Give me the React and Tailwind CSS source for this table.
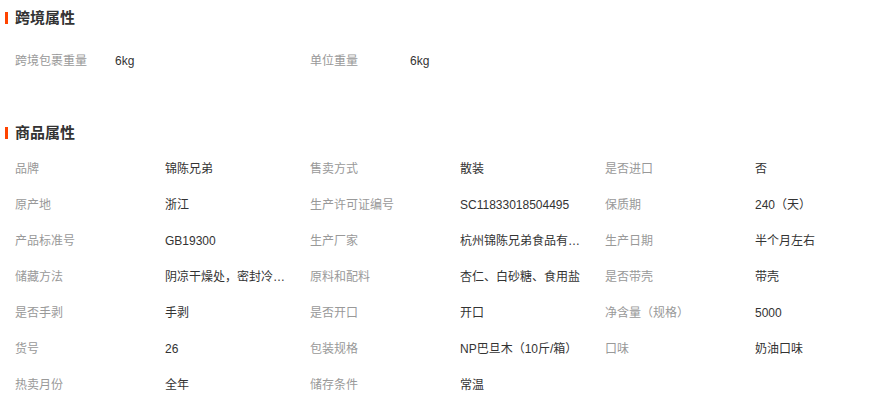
const crossAttrs = [
  { label: "跨境包裹重量", value: "6kg" },
  { label: "单位重量", value: "6kg" },
];

const productAttrs = [
  { label: "品牌", value: "锦陈兄弟" },
  { label: "售卖方式", value: "散装" },
  { label: "是否进口", value: "否" },
  { label: "原产地", value: "浙江" },
  { label: "生产许可证编号", value: "SC11833018504495" },
  { label: "保质期", value: "240（天）" },
  { label: "产品标准号", value: "GB19300" },
  { label: "生产厂家", value: "杭州锦陈兄弟食品有限公司" },
  { label: "生产日期", value: "半个月左右" },
  { label: "储藏方法", value: "阴凉干燥处，密封冷藏保存" },
  { label: "原料和配料", value: "杏仁、白砂糖、食用盐" },
  { label: "是否带壳", value: "带壳" },
  { label: "是否手剥", value: "手剥" },
  { label: "是否开口", value: "开口" },
  { label: "净含量（规格）", value: "5000" },
  { label: "货号", value: "26" },
  { label: "包装规格", value: "NP巴旦木（10斤/箱）" },
  { label: "口味", value: "奶油口味" },
  { label: "热卖月份", value: "全年" },
  { label: "储存条件", value: "常温" },
];

function SectionTitle({ children, className = "" }) {
  return (
    <div className={`flex h-[36px] items-center pl-[5px] ${className}`}>
      <span className="mr-[7px] h-[12px] w-[3px] bg-[#ff4400]" />
      <h3 className="text-[15px] font-bold text-[#333]">{children}</h3>
    </div>
  );
}

export default function App() {
  return (
    <div
      className="w-[878px] h-[406px] overflow-hidden bg-white text-[12px]"
      style={{ fontFamily: '"Liberation Sans", "Noto Sans CJK SC", sans-serif' }}
    >
      <SectionTitle>跨境属性</SectionTitle>
      <ul className="grid grid-cols-[295px_295px] pl-[15px] pt-[7px]">
        {crossAttrs.map((item) => (
          <li key={item.label} className="flex h-[36px] items-center">
            <span className="w-[100px] text-[#999]">{item.label}</span>
            <span className="text-[#333]">{item.value}</span>
          </li>
        ))}
      </ul>

      <SectionTitle className="mt-[36px] h-[35px]">商品属性</SectionTitle>
      <ul className="grid grid-cols-[295px_295px_288px] pl-[15px]">
        {productAttrs.map((item) => (
          <li key={item.label} className="flex h-[36px] items-center">
            <span className="w-[150px] shrink-0 text-[#999]">{item.label}</span>
            <span className="w-[122px] truncate text-[#333]">{item.value}</span>
          </li>
        ))}
      </ul>
    </div>
  );
}
